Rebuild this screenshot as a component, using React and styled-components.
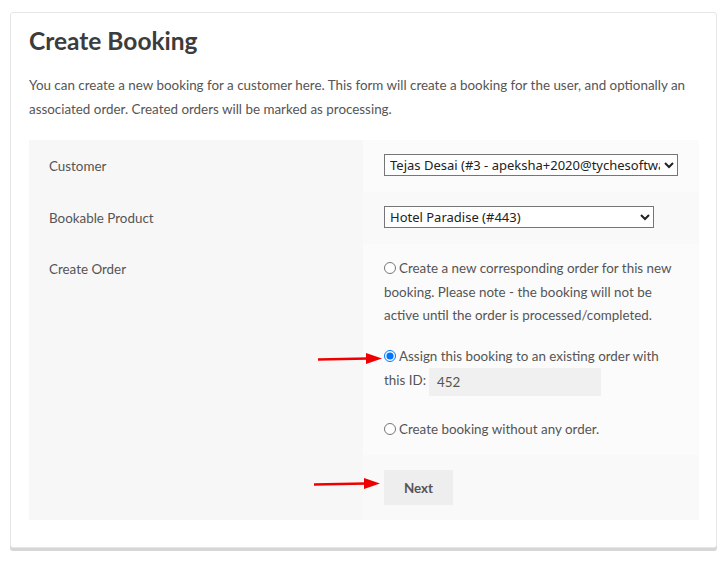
import React from 'react';
import styled, { createGlobalStyle } from 'styled-components';

const GlobalStyle = createGlobalStyle`
  body {
    margin: 0;
    background: #ffffff;
    font-family: Lato, "Liberation Sans", sans-serif;
    color: #555555;
  }
`;

const Page = styled.div`
  padding: 12px 10px 10px 10px;
`;

const Card = styled.div`
  position: relative;
  border: 1px solid #e6e6e6;
  border-radius: 3px;
  box-shadow: 0 3px 0 #d6d6d6;
  padding: 10px 18px 27px 18px;
  background: #fff;
`;

const Title = styled.h1`
  margin: 0;
  font-size: 24.5px;
  line-height: 36px;
  font-weight: 700;
  color: #3c3c3c;
`;

const Intro = styled.p`
  margin: 14px 0 19px 0;
  font-size: 13.4px;
  line-height: 24px;
`;

const FormTable = styled.div`
  display: grid;
  grid-template-columns: 334px 1fr;
  font-size: 13.4px;
`;

const Label = styled.div`
  background: #f7f7f7;
  padding: ${({ $top }) => $top || '13px'} 20px 0 20px;
  line-height: 24px;
`;

const Field = styled.div`
  background: ${({ $shade }) => ($shade ? '#f9f9f9' : '#fbfbfb')};
  padding: ${({ $pad }) => $pad || '14px 21px'};
  min-height: ${({ $height }) => $height || 'auto'};
  box-sizing: border-box;
`;

const Select = styled.select`
  width: ${({ $width }) => $width};
  height: 22px;
  font-family: "Noto Sans", sans-serif;
  font-size: 13px;
  color: #222;
  border: 1px solid #767676;
  border-radius: 0;
  background: #fff;
  padding: 0 1px;
  display: block;
`;

const Option = styled.label`
  display: block;
  line-height: 23.5px;
  margin-bottom: ${({ $gap }) => $gap || '17px'};
  &:last-child {
    margin-bottom: 0;
  }
`;

const Radio = styled.input`
  margin: 0 3px 0 0;
  width: 12px;
  height: 12px;
  vertical-align: -1px;
`;

const IdInput = styled.input`
  width: 172px;
  height: 28px;
  box-sizing: border-box;
  border: none;
  background: #f0f0f0;
  font-family: inherit;
  font-size: 13.4px;
  color: #555;
  padding: 0 8px;
  margin-left: 3px;
  vertical-align: middle;
`;

const Button = styled.button`
  width: 69px;
  height: 35px;
  border: none;
  background: #eeeeee;
  font-family: inherit;
  font-size: 13.4px;
  font-weight: 700;
  color: #555;
`;

const Arrow = styled.svg`
  position: absolute;
  left: ${({ $x }) => $x}px;
  top: ${({ $y }) => $y}px;
`;

const RedArrow = ({ x, y, w }) => (
  <Arrow $x={x} $y={y} width={w} height="14" viewBox={`0 0 ${w} 14`}>
    <line x1="0" y1="7.5" x2={w - 14} y2="6.5" stroke="#ee0000" strokeWidth="2.5" />
    <polygon points={`${w - 16},1 ${w},6.5 ${w - 16},12`} fill="#ee0000" />
  </Arrow>
);

export default function App() {
  return (
    <>
      <GlobalStyle />
      <Page>
        <Card>
          <Title>Create Booking</Title>
          <Intro>
            You can create a new booking for a customer here. This form will create a booking for the user, and optionally an
            associated order. Created orders will be marked as processing.
          </Intro>
          <FormTable>
            <Label $top="14px">Customer</Label>
            <Field $height="52px" $pad="14px 21px 0 21px">
              <Select $width="294px" defaultValue="c">
                <option value="c">Tejas Desai (#3 - apeksha+2020@tychesoftwares.com)</option>
              </Select>
            </Field>
            <Label $top="14px">Bookable Product</Label>
            <Field $shade $height="52px" $pad="14px 21px 0 21px">
              <Select $width="270px" defaultValue="p">
                <option value="p">Hotel Paradise (#443)</option>
              </Select>
            </Field>
            <Label>Create Order</Label>
            <Field $height="211px" $pad="13px 21px 10px 21px">
              <Option>
                <Radio type="radio" name="order" />
                Create a new corresponding order for this new booking. Please note - the booking will not be
                active until the order is processed/completed.
              </Option>
              <Option $gap="22px">
                <Radio type="radio" name="order" defaultChecked />
                Assign this booking to an existing order with this ID:
                <IdInput type="text" defaultValue="452" />
              </Option>
              <Option>
                <Radio type="radio" name="order" />
                Create booking without any order.
              </Option>
            </Field>
            <Label />
            <Field $shade $pad="15px 21px">
              <Button>Next</Button>
            </Field>
          </FormTable>
          <RedArrow x={307} y={339} w={64} />
          <RedArrow x={303} y={464} w={66} />
        </Card>
      </Page>
    </>
  );
}
